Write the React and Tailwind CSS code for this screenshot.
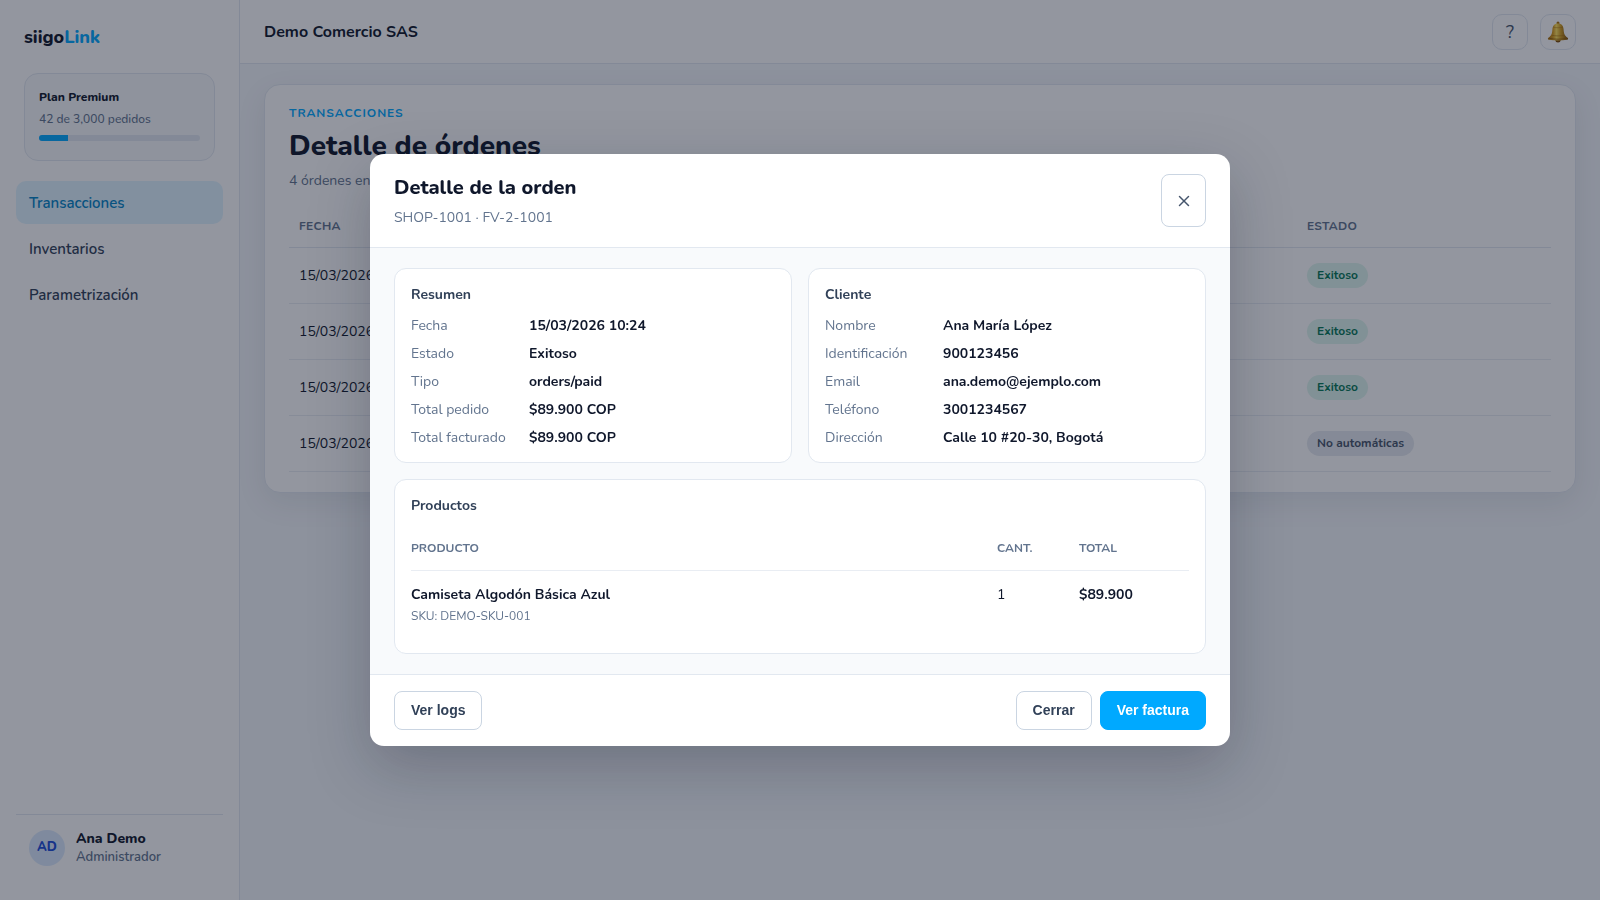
import { X } from 'lucide-react';

const navItems = ['Transacciones', 'Inventarios', 'Parametrización'];

const orders = [
    { id: 1, date: '15/03/2026', status: 'Exitoso' },
    { id: 2, date: '15/03/2026', status: 'Exitoso' },
    { id: 3, date: '15/03/2026', status: 'Exitoso' },
    { id: 4, date: '15/03/2026', status: 'No automáticas' },
];

const summary = [
    ['Fecha', '15/03/2026 10:24'],
    ['Estado', 'Exitoso'],
    ['Tipo', 'orders/paid'],
    ['Total pedido', '$89.900 COP'],
    ['Total facturado', '$89.900 COP'],
];

const customer = [
    ['Nombre', 'Ana María López'],
    ['Identificación', '900123456'],
    ['Email', 'ana.demo@ejemplo.com'],
    ['Teléfono', '3001234567'],
    ['Dirección', 'Calle 10 #20-30, Bogotá'],
];

const BellIcon = () => (
    <svg width="22" height="22" viewBox="0 0 22 22" aria-hidden="true">
        <defs>
            <linearGradient id="bell" x1="0" x2="1" y1="0" y2="0">
                <stop offset="0" stopColor="#a86d08" />
                <stop offset="0.25" stopColor="#d99c18" />
                <stop offset="0.42" stopColor="#ffe05a" />
                <stop offset="0.65" stopColor="#cf9a1c" />
                <stop offset="1" stopColor="#7a4b05" />
            </linearGradient>
        </defs>
        <circle cx="11" cy="2" r="1.5" fill="#a8700c" />
        <ellipse cx="11" cy="19.6" rx="2.6" ry="2" fill="#7d4a05" />
        <path
            d="M11 2.4c-3.9 0-5.4 2.7-5.6 6-.2 3.800-.9 6-4 8.300-.8.7-.6 1.700.5 2 5.600 1 12.600 1 18.200 0 1.100-.3 1.300-1.300.5-2-3.100-2.300-3.800-4.500-4-8.300-.2-3.300-1.700-6-5.600-6z"
            fill="url(#bell)"
        />
        <path d="M2.2 17.3c5 1.200 12.600 1.200 17.600 0" fill="none" stroke="#8f5a08" strokeWidth="0.8" />
        <path d="M5 14.3c3.500.8 8.500.8 12 0" fill="none" stroke="#a8700c" strokeWidth="0.6" />
        <path d="M6 6c2.500 1 7.500 1 10 0" fill="none" stroke="#a8700c" strokeWidth="0.5" />
    </svg>
);

const StatusPill = ({ status }) => (
    <span
        className={
            'inline-block rounded-full px-[10px] text-[12px] leading-[25px] font-bold ' +
            (status === 'Exitoso' ? 'bg-[#dff6ee] text-[#047857]' : 'bg-[#e6eaf0] text-[#475569]')
        }
    >
        {status}
    </span>
);

const InfoCard = ({ title, rows }) => (
    <section className="rounded-xl border border-slate-200 bg-white px-4 pt-4 pb-[10px]">
        <h3 className="text-[14px] leading-5 font-bold text-slate-700">{title}</h3>
        <dl className="mt-[7px]">
            {rows.map(([label, value]) => (
                <div key={label} className="flex text-[14px] leading-7">
                    <dt className="w-[118px] text-slate-500">{label}</dt>
                    <dd className="font-bold text-slate-900">{value}</dd>
                </div>
            ))}
        </dl>
    </section>
);

const Sidebar = () => (
    <aside className="flex w-60 shrink-0 flex-col border-r border-slate-200 bg-white px-4 py-6">
        <div className="px-2 text-[18px] leading-[26px] font-extrabold text-slate-900">
            siigo<span className="text-[#00a9ff]">Link</span>
        </div>
        <div className="mx-2 mt-[23px] h-[88px] rounded-[14px] border border-slate-200 bg-slate-50 px-[14px] py-3">
            <p className="text-[12px] leading-[22px] font-extrabold text-slate-900">Plan Premium</p>
            <p className="text-[12px] leading-[22px] font-medium text-slate-500">42 de 3,000 pedidos</p>
            <div className="mt-[5px] h-[6px] overflow-hidden rounded-full bg-slate-200">
                <div className="h-full w-[18%] bg-[#00a9ff]" />
            </div>
        </div>
        <nav className="mt-5 flex flex-col gap-[3px]">
            {navItems.map((item, i) => (
                <a
                    key={item}
                    href="#"
                    className={
                        'rounded-[10px] px-[13px] pt-0.5 text-[15px] leading-[41px] font-semibold ' +
                        (i === 0 ? 'bg-[#e0f4ff] text-[#0284c7]' : 'text-slate-700')
                    }
                >
                    {item}
                </a>
            ))}
        </nav>
        <div className="mt-auto flex items-center gap-[11px] border-t border-slate-200 px-[13px] pt-[14px] pb-[10px]">
            <div className="flex size-9 items-center justify-center rounded-full bg-[#dbeafe] text-[13px] font-extrabold text-[#1d4ed8]">
                AD
            </div>
            <div>
                <p className="text-[14px] leading-[19px] font-extrabold text-slate-900">Ana Demo</p>
                <p className="text-[13px] leading-[18px] font-semibold text-slate-500">Administrador</p>
            </div>
        </div>
    </aside>
);

const OrderModal = () => (
    <div className="fixed inset-0 flex items-center justify-center bg-[#0f172a]/45">
        <div
            role="dialog"
            aria-modal="true"
            aria-labelledby="order-title"
            className="w-[860px] max-w-full overflow-hidden rounded-[14px] bg-white shadow-[0_20px_60px_rgba(15,23,42,0.25)]"
        >
            <header className="flex items-start justify-between border-b border-slate-200 px-6 py-5">
                <div>
                    <h2 id="order-title" className="text-[20px] leading-[27px] font-extrabold text-slate-900">
                        Detalle de la orden
                    </h2>
                    <p className="mt-2 text-[14px] leading-[18px] text-slate-500">SHOP-1001 · FV-2-1001</p>
                </div>
                <button
                    type="button"
                    aria-label="Cerrar detalle"
                    className="flex h-[53px] w-[45px] items-center justify-center rounded-lg border border-slate-300 bg-white text-slate-600"
                >
                    <X size={18} strokeWidth={2} />
                </button>
            </header>
            <div className="flex flex-col gap-4 bg-slate-50 px-6 py-5">
                <div className="grid grid-cols-2 gap-4">
                    <InfoCard title="Resumen" rows={summary} />
                    <InfoCard title="Cliente" rows={customer} />
                </div>
                <section className="rounded-xl border border-slate-200 bg-white p-4">
                    <h3 className="text-[14px] leading-5 font-bold text-slate-700">Productos</h3>
                    <table className="mt-[10px] w-full table-fixed text-left">
                        <thead>
                            <tr className="border-b border-[#e9edf3] text-[12px] leading-[22px] text-slate-500 uppercase">
                                <th className="py-[11px] font-bold">Producto</th>
                                <th className="w-[82px] py-[11px] font-bold">Cant.</th>
                                <th className="w-[110px] py-[11px] font-bold">Total</th>
                            </tr>
                        </thead>
                        <tbody>
                            <tr className="align-top text-[14px] leading-[22px] text-slate-900">
                                <td className="pt-[13px] pb-[11px]">
                                    <p className="font-bold">Camiseta Algodón Básica Azul</p>
                                    <p className="text-[12px] leading-5 text-slate-500">SKU: DEMO-SKU-001</p>
                                </td>
                                <td className="pt-[13px]">1</td>
                                <td className="pt-[13px] font-bold">$89.900</td>
                            </tr>
                        </tbody>
                    </table>
                </section>
            </div>
            <footer className="flex gap-2 border-t border-slate-200 px-6 py-4 font-['Liberation_Sans',sans-serif] text-[14px] leading-[37px] font-bold">
                <button type="button" className="mr-auto rounded-lg border border-slate-300 bg-white px-4 text-slate-700">
                    Ver logs
                </button>
                <button type="button" className="rounded-lg border border-slate-300 bg-white px-4 text-slate-700">
                    Cerrar
                </button>
                <button type="button" className="rounded-lg border border-[#00a9ff] bg-[#00a9ff] px-4 text-white">
                    Ver factura
                </button>
            </footer>
        </div>
    </div>
);

const App = () => {
    return (
        <div className="flex min-h-screen bg-[#f4f7fb] font-['Nunito','Open_Sans',sans-serif] text-slate-900">
            <Sidebar />
            <div className="flex min-w-0 flex-1 flex-col">
                <header className="flex h-16 items-center justify-between border-b border-slate-200 bg-white px-6">
                    <span className="text-[16px] font-bold">Demo Comercio SAS</span>
                    <div className="flex gap-3">
                        <button
                            type="button"
                            aria-label="Ayuda"
                            className="size-9 rounded-[10px] border border-slate-200 bg-white text-[18px] leading-[34px] text-slate-600"
                        >
                            ?
                        </button>
                        <button
                            type="button"
                            aria-label="Notificaciones"
                            className="flex size-9 items-center justify-center rounded-[10px] border border-slate-200 bg-white"
                        >
                            <BellIcon />
                        </button>
                    </div>
                </header>
                <main className="px-6 py-5">
                    <section className="rounded-2xl border border-slate-200 bg-white px-6 py-5 shadow-[0_10px_30px_rgba(15,23,42,0.08)]">
                        <p className="text-[12px] leading-4 font-bold tracking-[0.08em] text-[#00a9ff] uppercase">Transacciones</p>
                        <h1 className="mt-[5px] text-[28px] leading-[40px] font-extrabold">Detalle de órdenes</h1>
                        <p className="mt-1 text-[14px] leading-[22px] text-slate-500">4 órdenes en</p>
                        <table className="mt-[15px] w-full table-fixed text-left">
                            <thead>
                                <tr className="border-b border-slate-200 text-[12px] leading-[22px] text-slate-500 uppercase">
                                    <th className="px-[10px] pt-2 pb-[10px] font-bold tracking-wide">Fecha</th>
                                    <th className="w-[254px] px-[10px] pt-2 pb-[10px] font-bold tracking-wide">Estado</th>
                                </tr>
                            </thead>
                            <tbody>
                                {orders.map((order) => (
                                    <tr key={order.id} className="h-14 border-b border-[#e9edf3] text-[14px]">
                                        <td className="px-[10px]">{order.date}</td>
                                        <td className="px-[10px]">
                                            <StatusPill status={order.status} />
                                        </td>
                                    </tr>
                                ))}
                            </tbody>
                        </table>
                    </section>
                </main>
            </div>
            <OrderModal />
        </div>
    );
};

export default App;
